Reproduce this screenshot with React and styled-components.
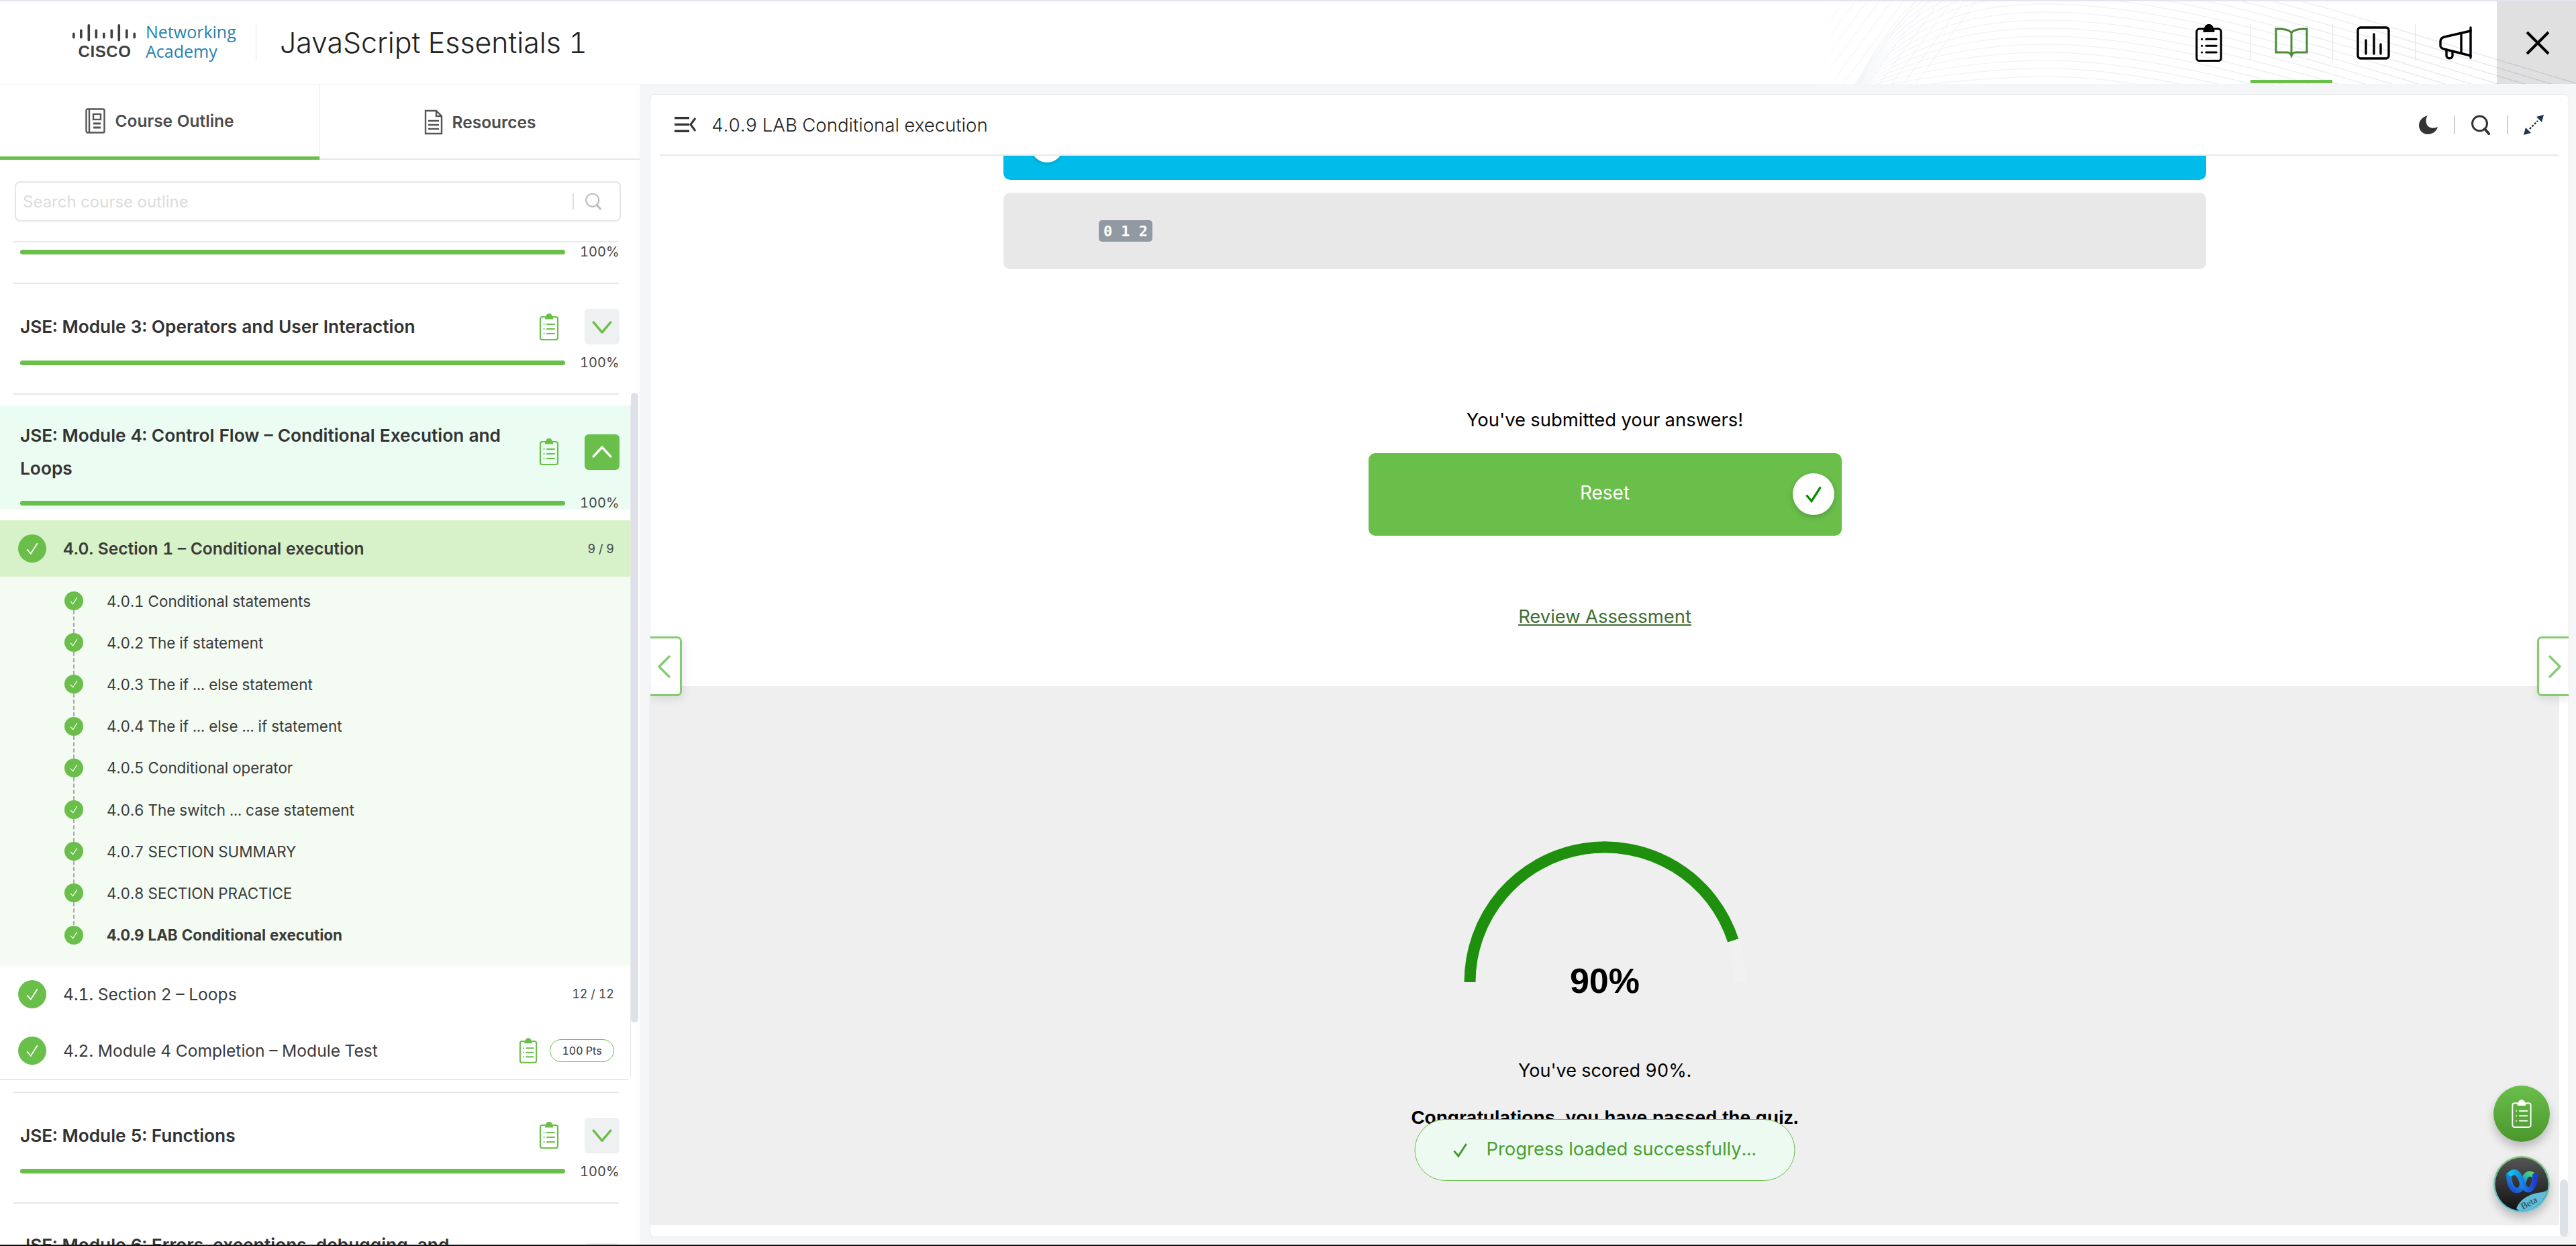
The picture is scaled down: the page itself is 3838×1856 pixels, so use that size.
// App.jsx
import React from "react";
import styled, { createGlobalStyle } from "styled-components";

const GREEN = "#6abf4b";
const SANS = `Inter, "Liberation Sans", sans-serif`;
const ARIAL = `"Liberation Sans", Arial, sans-serif`;

const GlobalStyle = createGlobalStyle`
  html, body {
    margin: 0;
    padding: 0;
    background: #f5f6f8;
    font-family: ${SANS};
    font-feature-settings: "tnum";
  }
  * { box-sizing: border-box; }
`;

const lessons = [
  "4.0.1 Conditional statements",
  "4.0.2 The if statement",
  "4.0.3 The if ... else statement",
  "4.0.4 The if ... else ... if statement",
  "4.0.5 Conditional operator",
  "4.0.6 The switch ... case statement",
  "4.0.7 SECTION SUMMARY",
  "4.0.8 SECTION PRACTICE",
  "4.0.9 LAB Conditional execution",
];

const ciscoBars = [
  [0, 12.5, 21.5], [11, 7.5, 21.5], [22.5, 0, 25.5], [33.5, 7.5, 21.5], [45, 12.5, 21.5],
  [56.5, 7.5, 21.5], [67.5, 0, 25.5], [79, 7.5, 21.5], [90.5, 12.5, 21.5],
];

// icons
const ClipboardIcon = ({ color = "#000", w = 30, h = 40, sw = 2 }) => (
  <svg width={w} height={h} viewBox="0 0 30 40" fill="none">
    <path d="M11 5 a4 4 0 0 1 8 0 h6 a3 3 0 0 1 3 3 v28 a3 3 0 0 1 -3 3 h-20 a3 3 0 0 1 -3 -3 v-28 a3 3 0 0 1 3 -3 z" stroke={color} strokeWidth={sw} />
    <path d="M9 4.5 h12 v4 h-12 z" fill={color} />
    <circle cx="15" cy="3.5" r="3.2" fill={color} />
    <g stroke={color} strokeWidth={sw} strokeLinecap="round">
      <path d="M12 16 h11 M12 23 h11 M12 30 h11" />
      <path d="M7.5 16 h.1 M7.5 23 h.1 M7.5 30 h.1" />
    </g>
  </svg>
);

const CheckMark = ({ size, color = "#fff", sw = 1.6 }) => (
  <svg width={size} height={size} viewBox="0 0 20 20" fill="none">
    <path d="M3 11 L8 17 L17 3" stroke={color} strokeWidth={sw} />
  </svg>
);

const Chevron = ({ up, color, size = 30, sw = 3 }) => (
  <svg width={size} height={size} viewBox="0 0 26 26" fill="none">
    <path d={up ? "M2 19 L13 7 L24 19" : "M2 7 L13 20 L24 7"} stroke={color} strokeWidth={sw} strokeLinecap="round" strokeLinejoin="round" />
  </svg>
);

const SearchGlyph = ({ color, size, sw = 2.5 }) => (
  <svg width={size} height={size} viewBox="0 0 30 30" fill="none">
    <circle cx="13.5" cy="13" r="11" stroke={color} strokeWidth={sw} />
    <path d="M21 21 L27 28" stroke={color} strokeWidth={sw + 1} strokeLinecap="round" />
  </svg>
);

const App = () => (
  <>
    <GlobalStyle />
    <Page>
      <Header>
        <Waves width="1138" height="123" viewBox="0 0 1138 123" fill="none">
          <defs>
            <linearGradient id="waveStroke" gradientUnits="userSpaceOnUse" x1="100" y1="0" x2="1138" y2="0">
              <stop offset="0" stopColor="#f4f5f8" />
              <stop offset="0.5" stopColor="#eef1f5" />
              <stop offset="1" stopColor="#dfe4ec" />
            </linearGradient>
          </defs>
          {Array.from({ length: 14 }, (_, i) => (
            <path key={`h${i}`} d={`M${i * 18 - 80} 123 L${i * 18 + 10} 0`} stroke="#f3f4f7" strokeWidth="1.2" />
          ))}
          {Array.from({ length: 16 }, (_, i) => {
            const p = -68 + i * 12;
            return (
              <path
                key={p}
                d={`M60 135 C150 ${p + 14} 260 ${p} 350 ${p} C550 ${p} 800 ${p + 90} 1138 ${p + 190}`}
                stroke="url(#waveStroke)"
                strokeWidth="1.4"
              />
            );
          })}
        </Waves>
        <Brand>
          <CiscoMark>
            <svg width="96" height="26" viewBox="0 0 96 26">
              {ciscoBars.map(([x, y1, y2]) => (
                <rect key={x} x={x} y={y1} width="3.6" height={y2 - y1} rx="1.8" fill="#3f3f3f" />
              ))}
            </svg>
            <CiscoWord>CISCO</CiscoWord>
          </CiscoMark>
          <AcademyWord>
            <span>Networking</span>
            <span>Academy</span>
          </AcademyWord>
        </Brand>
        <CourseTitle>JavaScript Essentials 1</CourseTitle>
        <HeaderNav>
          <HeaderItem>
            <ClipboardIcon w={42} h={56} sw={2.2} />
          </HeaderItem>
          <HeaderItem $active $sep>
            <svg width="50" height="46" viewBox="0 0 50 46" fill="none" stroke="#4d8a3a" strokeWidth="3">
              <path d="M25 8 C22 3 14 2 2 2 V37 H19 C22 37 24 39 25 42 C26 39 28 37 31 37 H48 V2 C36 2 28 3 25 8 Z M25 8 V42" />
            </svg>
          </HeaderItem>
          <HeaderItem $sep>
            <svg width="50" height="50" viewBox="0 0 50 50" fill="none" stroke="#000" strokeWidth="3.4" strokeLinecap="round">
              <rect x="2" y="2" width="46" height="46" rx="4" />
              <path d="M14 41 V21 M26 41 V12 M36 41 V27" />
            </svg>
          </HeaderItem>
          <HeaderItem $sep>
            <svg width="50" height="50" viewBox="0 0 50 50" fill="none" stroke="#000" strokeWidth="3.4" strokeLinecap="round" strokeLinejoin="round">
              <path d="M47 2 V47" />
              <path d="M47 7 L8 16 C4 17 2 19 2 23 V29 C2 32 4 33 7 34 L47 44" />
              <path d="M33 11 V40" />
              <path d="M11 35 V44 C11 49 20 49 20 44 V37" />
            </svg>
          </HeaderItem>
          <CloseItem>
            <svg width="36" height="36" viewBox="0 0 36 36" stroke="#000" strokeWidth="4">
              <path d="M2 2 L34 34 M34 2 L2 34" />
            </svg>
          </CloseItem>
        </HeaderNav>
      </Header>

      <Body>
        <Sidebar>
          <Tabs>
            <Tab $active>
              <svg width="30" height="38" viewBox="0 0 30 38" fill="none" stroke="#555" strokeWidth="2.4">
                <rect x="1.5" y="1.5" width="27" height="35" rx="2" />
                <path d="M6 2 V36" />
                <rect x="12" y="9" width="11" height="8" />
                <path d="M12 23 H23 M12 29 H23" strokeWidth="3" />
              </svg>
              Course Outline
            </Tab>
            <Tab>
              <svg width="28" height="38" viewBox="0 0 28 38" fill="none" stroke="#555" strokeWidth="2.4">
                <path d="M2 2 H18 L26 10 V36 H2 Z M18 2 V10 H26" />
                <path d="M6 17 H22 M6 23 H22 M6 29 H22" />
              </svg>
              Resources
            </Tab>
          </Tabs>

          <Outline>
            <SearchBox>
              <SearchPlaceholder>Search course outline</SearchPlaceholder>
              <SearchDivider />
              <SearchGlyph color="#bdbdbd" size={26} />
            </SearchBox>

            <Divider $first />
            <ProgressRow />
            <Divider />

            <ModuleHead>
              <ModuleTitle>JSE: Module 3: Operators and User Interaction</ModuleTitle>
              <ClipboardIcon color={GREEN} sw={2.2} />
              <ToggleButton>
                <Chevron color={GREEN} />
              </ToggleButton>
            </ModuleHead>
            <ProgressRow $spaced />
            <Divider />

            <OpenModule>
              <OpenTop>
                <ModuleHead $open>
                  <ModuleTitle>JSE: Module 4: Control Flow – Conditional Execution and Loops</ModuleTitle>
                  <ClipboardIcon color={GREEN} sw={2.2} />
                  <ToggleButton $open>
                    <Chevron up color="#fff" />
                  </ToggleButton>
                </ModuleHead>
                <ProgressRow $spaced $flush />
              </OpenTop>
              <SectionRow $active>
                <CheckCircle $size={42}>
                  <CheckMark size={22} />
                </CheckCircle>
                <SectionName $bold>4.0. Section 1 – Conditional execution</SectionName>
                <SectionCount>9 / 9</SectionCount>
              </SectionRow>
              <Lessons>
                {lessons.map((l, i) => (
                  <Lesson key={l} $last={i === lessons.length - 1}>
                    <CheckCircle $size={28}>
                      <CheckMark size={14} />
                    </CheckCircle>
                    <LessonName $bold={i === lessons.length - 1}>{l}</LessonName>
                  </Lesson>
                ))}
              </Lessons>
              <SectionRow>
                <CheckCircle $size={42}>
                  <CheckMark size={22} />
                </CheckCircle>
                <SectionName>4.1. Section 2 – Loops</SectionName>
                <SectionCount>12 / 12</SectionCount>
              </SectionRow>
              <SectionRow>
                <CheckCircle $size={42}>
                  <CheckMark size={22} />
                </CheckCircle>
                <SectionName>4.2. Module 4 Completion – Module Test</SectionName>
                <ClipboardIcon color={GREEN} w={28} h={38} sw={2.2} />
                <PointsPill>100 Pts</PointsPill>
              </SectionRow>
            </OpenModule>

            <Divider $afterOpen />
            <ModuleHead>
              <ModuleTitle>JSE: Module 5: Functions</ModuleTitle>
              <ClipboardIcon color={GREEN} sw={2.2} />
              <ToggleButton>
                <Chevron color={GREEN} />
              </ToggleButton>
            </ModuleHead>
            <ProgressRow $spaced />
            <Divider />
            <ModuleHead>
              <ModuleTitle>JSE: Module 6: Errors, exceptions, debugging, and troubleshooting</ModuleTitle>
              <ClipboardIcon color={GREEN} sw={2.2} />
              <ToggleButton>
                <Chevron color={GREEN} />
              </ToggleButton>
            </ModuleHead>
          </Outline>
          <SideScrollThumb />
        </Sidebar>

        <Card>
          <CardHead>
            <svg width="32" height="23" viewBox="0 0 32 23" fill="#333">
              <rect x="0" y="0" width="22" height="3.4" />
              <rect x="0" y="9.8" width="22" height="3.4" />
              <rect x="0" y="19.6" width="22" height="3.4" />
              <path d="M31 2 L24 11.5 L31 21" fill="none" stroke="#333" strokeWidth="3" />
            </svg>
            <PageTitle>4.0.9 LAB Conditional execution</PageTitle>
            <HeadTools>
              <svg width="28" height="28" viewBox="0 0 28 28" fill="#333">
                <path d="M13 0 C6 2 0 7 0 15 C0 22 6 28 13 28 C20 28 26 24 28 17 C22 20 15 19 12 14 C10 9 10 4 13 0 Z" />
              </svg>
              <ToolSep />
              <SearchGlyph color="#333" size={30} sw={3} />
              <ToolSep />
              <svg width="30" height="30" viewBox="0 0 30 30" fill="none">
                <path d="M9 21 L21 9" stroke="#1f2a36" strokeWidth="2.4" strokeDasharray="3 2" />
                <path d="M30 0 L19 3 L27 11 Z M0 30 L11 27 L3 19 Z" fill="#1f3550" />
              </svg>
            </HeadTools>
          </CardHead>

          <CardBody>
            <Pane>
              <Lab>
                <BlueBlock>
                  <BlueKnob />
                </BlueBlock>
                <OutputBlock>
                  <OutputChip>0 1 2</OutputChip>
                </OutputBlock>
                <SubmittedText>You've submitted your answers!</SubmittedText>
                <ResetButton>
                  Reset
                  <ResetCheck>
                    <CheckMark size={30} color="#0a8a00" sw={2.2} />
                  </ResetCheck>
                </ResetButton>
                <ReviewLink>Review Assessment</ReviewLink>
              </Lab>
              <Results>
                <Gauge>
                  <svg width="440" height="218" viewBox="0 0 440 218" fill="none">
                    <path d="M19 218 A201 201 0 0 1 421 218" stroke="#f1f1f1" strokeWidth="17" />
                    <path d="M19 218 A201 201 0 0 1 411.2 155.9" stroke="#1e900e" strokeWidth="17" />
                  </svg>
                  <GaugeValue>90%</GaugeValue>
                </Gauge>
                <ScoreText>You've scored 90%.</ScoreText>
                <PassText>Congratulations, you have passed the quiz.</PassText>
                <Toast>
                  <CheckMark size={26} color="#3f9a2a" sw={2.2} />
                  <ToastText>Progress loaded successfully...</ToastText>
                </Toast>
              </Results>
            </Pane>
            <ScrollTrack>
              <ScrollThumb />
            </ScrollTrack>
          </CardBody>

          <PageArrow $side="left">
            <Chevronish dir="left" />
          </PageArrow>
          <PageArrow $side="right">
            <Chevronish dir="right" />
          </PageArrow>

          <FabStack>
            <GreenFab>
              <ClipboardIcon color="#fff" w={32} h={42} sw={1.8} />
            </GreenFab>
            <WebexFab>
              <svg width="84" height="84" viewBox="0 0 84 84">
                <defs>
                  <linearGradient id="wxRing" x1="0" y1="0" x2="0" y2="1">
                    <stop offset="0" stopColor="#83c474" />
                    <stop offset="1" stopColor="#5fbfe0" />
                  </linearGradient>
                  <linearGradient id="wxDark" x1="0" y1="0" x2="0" y2="1">
                    <stop offset="0" stopColor="#555" />
                    <stop offset="1" stopColor="#111" />
                  </linearGradient>
                  <linearGradient id="wxLeft" x1="0" y1="0" x2="1" y2="0">
                    <stop offset="0" stopColor="#12c0e8" />
                    <stop offset="0.6" stopColor="#1a6fe0" />
                    <stop offset="1" stopColor="#1c3fd0" />
                  </linearGradient>
                  <linearGradient id="wxRight" x1="0" y1="1" x2="1" y2="0">
                    <stop offset="0" stopColor="#1c4ad8" />
                    <stop offset="0.6" stopColor="#1a9ad0" />
                    <stop offset="1" stopColor="#58de68" />
                  </linearGradient>
                </defs>
                <circle cx="42" cy="42" r="42" fill="url(#wxRing)" />
                <circle cx="42" cy="42" r="39.5" fill="url(#wxDark)" />
                <path d="M34 78 C40 64 50 60 60 56 C70 54 78 54 80 50 C78 66 62 82 42 82 C38 82 36 80 34 78 Z" fill="#62bcd8" />
                <path d="M23 28 C23 44 30 53 37 51 C44 49 44 36 48 30 C52 25 58 26 61 30" fill="none" stroke="url(#wxRight)" strokeWidth="8" strokeLinecap="round" />
                <path d="M26 26 C34 19 40 30 43 40 C46 50 54 54 58 46 C61 40 62 34 62 29" fill="none" stroke="url(#wxLeft)" strokeWidth="8" strokeLinecap="round" />
                <text x="55" y="74" fontSize="14" fontFamily='"Liberation Serif", serif' fill="#26414c" transform="rotate(-28 55 74)" textAnchor="middle">Beta</text>
              </svg>
            </WebexFab>
          </FabStack>
        </Card>
      </Body>
    </Page>
  </>
);

const Chevronish = ({ dir }) => (
  <svg width="20" height="34" viewBox="0 0 20 34" fill="none">
    <path d={dir === "left" ? "M18 2 L3 17 L18 32" : "M2 2 L17 17 L2 32"} stroke="#85cc6f" strokeWidth="3.4" strokeLinecap="round" strokeLinejoin="round" />
  </svg>
);

function ProgressRow({ $spaced, $flush }) {
  return (
    <ProgressWrap $spaced={$spaced} $flush={$flush}>
      <ProgressTrack />
      <ProgressLabel>100%</ProgressLabel>
    </ProgressWrap>
  );
}

export default App;

// page frame
const Page = styled.div`
  width: 3838px;
  height: 1856px;
  display: flex;
  flex-direction: column;
  overflow: hidden;
  background: #f5f6f8;
  border-top: 2px solid #e4e4f0;
  border-bottom: 2px solid #111;
`;

// header
const Header = styled.header`
  position: relative;
  flex: 0 0 123px;
  display: flex;
  align-items: center;
  padding-left: 108px;
  background: #fff;
  overflow: hidden;
`;

const Waves = styled.svg`
  position: absolute;
  top: 0;
  right: 0;
  mask-image: linear-gradient(to right, transparent, #000 6%);
`;

const Brand = styled.div`
  position: relative;
  display: flex;
  align-items: flex-start;
  gap: 13px;
  height: 55px;
  width: 274px;
  border-right: 1px solid #e3e3e3;
`;

const CiscoMark = styled.div`
  display: flex;
  flex-direction: column;
  align-items: center;
  width: 96px;
`;

const CiscoWord = styled.span`
  margin-top: 3px;
  font-family: ${ARIAL};
  font-weight: 700;
  font-size: 24px;
  line-height: 24px;
  letter-spacing: 0.6px;
  color: #3f3f3f;
`;

const AcademyWord = styled.div`
  display: flex;
  flex-direction: column;
  font-family: "Open Sans", sans-serif;
  font-size: 25px;
  line-height: 29px;
  margin-top: -3px;
  color: #2a81ac;
`;

const CourseTitle = styled.h1`
  position: relative;
  margin: 0 0 0 35px;
  font-weight: 300;
  font-size: 42.8px;
  color: #222;
`;

const HeaderNav = styled.nav`
  margin-left: auto;
  display: flex;
  height: 100%;
  position: relative;
`;

const HeaderItem = styled.div`
  position: relative;
  width: 122.5px;
  display: flex;
  align-items: center;
  justify-content: center;

  &::before {
    content: ${({ $sep }) => ($sep ? '""' : "none")};
    position: absolute;
    left: 0;
    top: 33px;
    height: 55px;
    width: 1px;
    background: #e3e3e3;
  }

  &::after {
    content: ${({ $active }) => ($active ? '""' : "none")};
    position: absolute;
    left: 0;
    right: 0;
    bottom: 1px;
    height: 5px;
    background: ${GREEN};
  }
`;

const CloseItem = styled.button`
  width: 118px;
  padding: 0 0 0 4px;
  display: flex;
  align-items: center;
  justify-content: center;
  border: none;
  background: rgba(0, 0, 0, 0.12);
`;

// body
const Body = styled.div`
  flex: 1;
  min-height: 0;
  display: flex;
  padding-top: 2px;
`;

const Sidebar = styled.aside`
  position: relative;
  flex: 0 0 953px;
  display: flex;
  flex-direction: column;
  overflow: hidden;
  background: #fff;
`;

const Tabs = styled.div`
  flex: 0 0 111px;
  display: flex;
`;

const Tab = styled.div`
  flex: 1;
  display: flex;
  align-items: center;
  justify-content: center;
  gap: 14px;
  font-size: 24.5px;
  font-weight: 600;
  color: #4d4d4d;
  border-left: ${({ $active }) => ($active ? "none" : "1px solid #e8e8e8")};
  border-bottom: ${({ $active }) => ($active ? `5px solid ${GREEN}` : "2px solid #e5e7ea")};
`;

const Outline = styled.div`
  flex: 1;
  min-height: 0;
  width: 940px;
  overflow: hidden;
  padding-top: 32px;
`;

const SearchBox = styled.div`
  height: 60px;
  margin: 0 28px 0 22px;
  width: 903px;
  padding: 0 26px 0 10px;
  display: flex;
  align-items: center;
  gap: 16px;
  border: 2px solid #e6e6e6;
  border-radius: 8px;
`;

const SearchPlaceholder = styled.span`
  flex: 1;
  font-size: 24px;
  color: #dcdcdc;
`;

const SearchDivider = styled.span`
  width: 2px;
  height: 25px;
  background: #e0e0e0;
`;

const Divider = styled.div`
  height: 2px;
  width: 903px;
  margin: ${({ $first, $afterOpen }) => ($first ? "29px" : $afterOpen ? "17px" : "0")} 0 0 19px;
  background: #e8e8e8;
`;

const ProgressWrap = styled.div`
  height: 20px;
  display: flex;
  align-items: center;
  padding-left: 30px;
  margin-top: ${({ $spaced }) => ($spaced ? "17px" : "4px")};
  margin-bottom: ${({ $flush }) => ($flush ? "16px" : "36px")};
`;

const ProgressTrack = styled.div`
  width: 812px;
  height: 7px;
  border-radius: 4px;
  background: ${GREEN};
`;

const ProgressLabel = styled.span`
  margin-left: 22px;
  font-size: 20px;
  color: #444;
`;

const ModuleHead = styled.div`
  display: flex;
  align-items: center;
  padding-left: 30px;
  width: 923px;
  margin-top: ${({ $open }) => ($open ? "0" : "37px")};
  gap: 0;
  min-height: 53px;

  & > svg {
    flex-shrink: 0;
    margin-right: 38px;
  }
`;

const ModuleTitle = styled.h3`
  flex: 1;
  margin: 0;
  font-size: 26.3px;
  font-weight: 600;
  line-height: 49px;
  color: #333;
  padding-right: 30px;
`;

const ToggleButton = styled.div`
  flex: 0 0 52px;
  height: 53px;
  display: flex;
  align-items: center;
  justify-content: center;
  border-radius: 6px;
  background: ${({ $open }) => ($open ? GREEN : "#eff0f2")};
`;

const OpenModule = styled.section`
  margin-top: 16px;
  border-bottom: 2px solid #e8e8e8;
  border-right: 1px solid #e8e8e8;
  border-bottom-right-radius: 8px;
`;

const OpenTop = styled.div`
  padding-top: 20px;
  background: #ebfdf2;
`;

const SectionRow = styled.div`
  height: 84px;
  display: flex;
  align-items: center;
  padding: 0 24px 0 27px;
  background: ${({ $active }) => ($active ? "#d7f1c8" : "#fff")};

  & > svg {
    margin-right: 18px;
  }
`;

const CheckCircle = styled.span`
  flex-shrink: 0;
  width: ${({ $size }) => $size}px;
  height: ${({ $size }) => $size}px;
  display: flex;
  align-items: center;
  justify-content: center;
  border-radius: 50%;
  background: ${GREEN};
`;

const SectionName = styled.span`
  flex: 1;
  margin-left: 25px;
  font-size: 24.6px;
  font-weight: ${({ $bold }) => ($bold ? 600 : 400)};
  color: #3a3a3a;
`;

const SectionCount = styled.span`
  font-size: 18px;
  color: #444;
`;

const PointsPill = styled.span`
  width: 96px;
  height: 34px;
  display: flex;
  align-items: center;
  justify-content: center;
  font-size: 16px;
  color: #333;
  border: 1.5px solid ${GREEN};
  border-radius: 17px;
`;

const Lessons = styled.div`
  padding: 5px 0 15px;
  background: #f3fbf2;
`;

const Lesson = styled.div`
  position: relative;
  height: 62.2px;
  display: flex;
  align-items: center;
  padding-left: 96px;

  &::after {
    content: ${({ $last }) => ($last ? "none" : '""')};
    position: absolute;
    left: 109px;
    top: 45px;
    height: 34px;
    border-left: 2px dashed #a9a9a9;
  }
`;

const LessonName = styled.span`
  margin-left: 35px;
  font-size: 22.4px;
  font-weight: ${({ $bold }) => ($bold ? 700 : 400)};
  color: #3a3a3a;
`;

const SideScrollThumb = styled.div`
  position: absolute;
  left: 940px;
  top: 458px;
  width: 11px;
  height: 938px;
  border-radius: 6px;
  background: #dee2e8;
`;

// main card
const Card = styled.main`
  position: relative;
  flex: 0 0 2860px;
  margin: 13px 0 11px 15px;
  display: flex;
  flex-direction: column;
  background: #fff;
  border: 1px solid #e5e6e8;
  border-radius: 8px;
  overflow: hidden;
`;

const CardHead = styled.div`
  flex: 0 0 91px;
  margin: 0 14px;
  padding: 0 23px 0 22px;
  display: flex;
  align-items: center;
  border-bottom: 2px solid #e8e8e8;
`;

const PageTitle = styled.h2`
  margin: 0 0 0 23px;
  font-size: 27.6px;
  font-weight: 300;
  color: #222;
`;

const HeadTools = styled.div`
  margin-left: auto;
  display: flex;
  align-items: center;
  gap: 23.5px;
`;

const ToolSep = styled.span`
  width: 2px;
  height: 28px;
  background: #cfcfcf;
`;

const CardBody = styled.div`
  flex: 1;
  min-height: 0;
  display: flex;
`;

const Pane = styled.div`
  flex: 1;
  min-width: 0;
  display: flex;
  flex-direction: column;
  padding-bottom: 17px;
`;

const Lab = styled.div`
  flex: 0 0 790px;
  display: flex;
  flex-direction: column;
  align-items: center;
`;

const BlueBlock = styled.div`
  position: relative;
  width: 1792px;
  height: 36px;
  overflow: hidden;
  background: #00bceb;
  border-radius: 0 0 10px 10px;
`;

const BlueKnob = styled.div`
  position: absolute;
  left: 41px;
  top: -38px;
  width: 48px;
  height: 48px;
  border-radius: 50%;
  background: #fff;
  box-shadow: 0 2px 6px rgba(0, 0, 0, 0.15);
`;

const OutputBlock = styled.div`
  width: 1792px;
  height: 114px;
  margin-top: 19px;
  padding-left: 142px;
  display: flex;
  align-items: center;
  background: #e8e8e9;
  border-radius: 10px;
`;

const OutputChip = styled.code`
  width: 80px;
  height: 32px;
  display: flex;
  align-items: center;
  justify-content: center;
  border-radius: 5px;
  background: #9299a3;
  color: #fff;
  font-family: "DejaVu Sans Mono", monospace;
  font-weight: 700;
  font-size: 22px;
`;

const BodyText = styled.p`
  margin: 0;
  font-family: ${SANS};
  font-size: 27.4px;
  line-height: 40px;
  color: #000;
  text-align: center;
`;

const SubmittedText = styled(BodyText)`
  margin-top: 204px;
`;

const ResetButton = styled.div`
  position: relative;
  width: 705px;
  height: 123px;
  margin-top: 30px;
  padding-bottom: 6px;
  display: flex;
  align-items: center;
  justify-content: center;
  font-family: ${SANS};
  font-size: 28px;
  color: #fff;
  background: ${GREEN};
  border-radius: 10px;
`;

const ResetCheck = styled.span`
  position: absolute;
  right: 11px;
  top: 30px;
  width: 62px;
  height: 62px;
  display: flex;
  align-items: center;
  justify-content: center;
  border-radius: 50%;
  background: #fff;
  box-shadow: 0 3px 8px rgba(0, 0, 0, 0.2);
`;

const ReviewLink = styled(BodyText)`
  margin-top: 100px;
  color: #3e6e2f;
  text-decoration: underline;
`;

const Results = styled.div`
  position: relative;
  flex: 1;
  min-height: 0;
  display: flex;
  flex-direction: column;
  align-items: center;
  background: #efefef;
  overflow: hidden;
  padding-top: 223px;
`;

const Gauge = styled.div`
  position: relative;
  width: 440px;
  height: 218px;
`;

const GaugeValue = styled.div`
  position: absolute;
  left: 0;
  right: 0;
  top: 186px;
  text-align: center;
  font-family: ${ARIAL};
  font-weight: 700;
  font-size: 52px;
  line-height: 60px;
  color: #000;
`;

const ScoreText = styled(BodyText)`
  margin-top: 112px;
  font-size: 27px;
`;

const PassText = styled(BodyText)`
  margin-top: 30px;
  font-family: ${ARIAL};
  font-size: 28px;
  font-weight: 700;
`;

const Toast = styled.div`
  position: absolute;
  left: 50%;
  top: 645px;
  transform: translateX(-50%);
  width: 567px;
  height: 92px;
  display: flex;
  align-items: center;
  gap: 26px;
  padding-left: 54px;
  font-family: ${SANS};
  font-size: 27.4px;
  color: #4a9e2f;
  background: #edfaf2;
  border: 1.5px solid ${GREEN};
  border-radius: 46px;
`;

const ToastText = styled.span`
  padding-bottom: 4px;
`;

const ScrollTrack = styled.div`
  flex: 0 0 14px;
  display: flex;
  flex-direction: column;
  justify-content: flex-end;
  align-items: center;
`;

const ScrollThumb = styled.div`
  width: 12px;
  height: 85px;
  border-radius: 6px;
  background: #dee2e8;
`;

const PageArrow = styled.div`
  position: absolute;
  ${({ $side }) => $side}: 0;
  top: 807px;
  width: 47px;
  height: 89px;
  padding-${({ $side }) => ($side === "left" ? "right" : "left")}: 4px;
  display: flex;
  align-items: center;
  justify-content: center;
  background: rgba(255, 255, 255, 0.85);
  border: 3px solid #85cc6f;
  border-${({ $side }) => $side}: none;
  border-radius: ${({ $side }) => ($side === "left" ? "0 7px 7px 0" : "7px 0 0 7px")};
  box-shadow: 2px 4px 14px rgba(0, 0, 0, 0.1);
`;

const FabStack = styled.div`
  position: absolute;
  right: 28px;
  top: 1476px;
  display: flex;
  flex-direction: column;
  gap: 21px;
`;

const GreenFab = styled.div`
  width: 84px;
  height: 84px;
  display: flex;
  align-items: center;
  justify-content: center;
  border-radius: 50%;
  background: linear-gradient(#6abf4b, #4b962c);
  box-shadow: 0 8px 14px rgba(0, 0, 0, 0.22);
`;

const WebexFab = styled.div`
  width: 84px;
  height: 84px;
  border-radius: 50%;
  box-shadow: 0 8px 14px rgba(0, 0, 0, 0.22);

  svg {
    display: block;
  }
`;
